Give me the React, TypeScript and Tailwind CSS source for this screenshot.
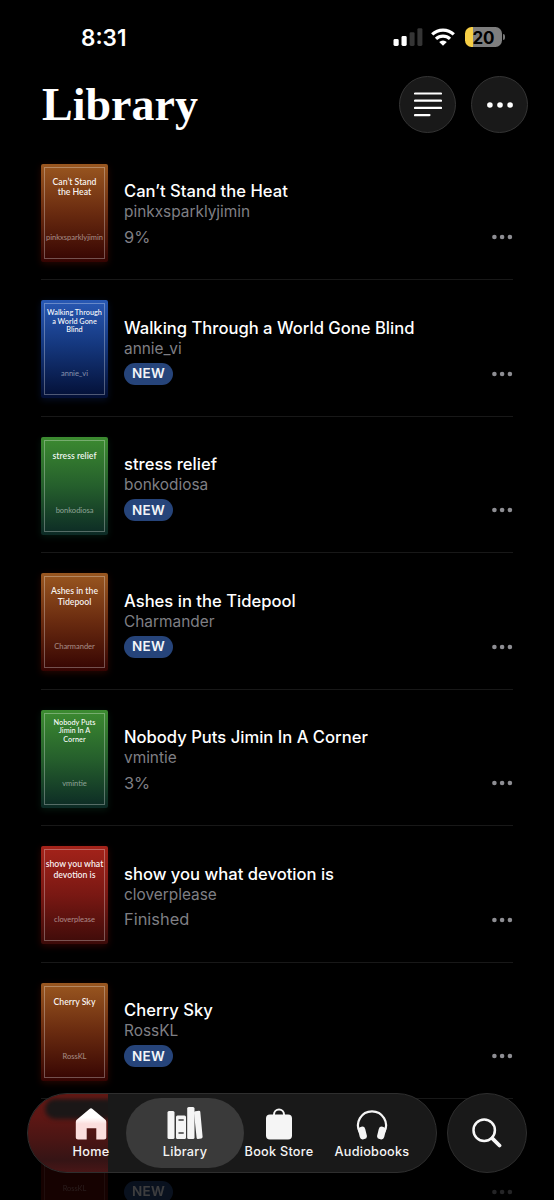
import type { ReactNode } from "react";
import clsx from "clsx";

type Book = {
  title: string;
  author: string;
  status: string;
  cover: keyof typeof coverColors;
  coverLines: string[];
  layout: keyof typeof titleLayouts;
};

const coverColors = {
  orange: "bg-[linear-gradient(180deg,#9a5720_0%,#6b2c10_48%,#350402_100%)] shadow-[0_2px_7px_rgba(110,20,5,0.35)]",
  blue: "bg-[linear-gradient(180deg,#2858b4_0%,#15387f_45%,#030f35_100%)] shadow-[0_2px_7px_rgba(15,45,120,0.3)]",
  green: "bg-[linear-gradient(180deg,#3c8b30_0%,#255f2c_50%,#0c2a25_100%)] shadow-[0_2px_7px_rgba(15,75,45,0.3)]",
  red: "bg-[linear-gradient(180deg,#a5231a_0%,#791813_50%,#3d0b09_100%)] shadow-[0_2px_7px_rgba(130,15,10,0.35)]",
};

const titleLayouts = {
  single: "pt-[9px] text-[8.7px] leading-[11px]",
  double: "pt-[9px] text-[8.7px] leading-[10.5px]",
  triple: "pt-[5px] text-[7.3px] leading-[8.7px]",
};

const books: Book[] = [
  {
    title: "Can’t Stand the Heat",
    author: "pinkxsparklyjimin",
    status: "9%",
    cover: "orange",
    coverLines: ["Can’t Stand", "the Heat"],
    layout: "double",
  },
  {
    title: "Walking Through a World Gone Blind",
    author: "annie_vi",
    status: "NEW",
    cover: "blue",
    coverLines: ["Walking Through", "a World Gone", "Blind"],
    layout: "triple",
  },
  {
    title: "stress relief",
    author: "bonkodiosa",
    status: "NEW",
    cover: "green",
    coverLines: ["stress relief"],
    layout: "single",
  },
  {
    title: "Ashes in the Tidepool",
    author: "Charmander",
    status: "NEW",
    cover: "orange",
    coverLines: ["Ashes in the", "Tidepool"],
    layout: "double",
  },
  {
    title: "Nobody Puts Jimin In A Corner",
    author: "vmintie",
    status: "3%",
    cover: "green",
    coverLines: ["Nobody Puts", "Jimin In A", "Corner"],
    layout: "triple",
  },
  {
    title: "show you what devotion is",
    author: "cloverplease",
    status: "Finished",
    cover: "red",
    coverLines: ["show you what", "devotion is"],
    layout: "double",
  },
  {
    title: "Cherry Sky",
    author: "RossKL",
    status: "NEW",
    cover: "orange",
    coverLines: ["Cherry Sky"],
    layout: "single",
  },
];

function Dots({ className }: { className?: string }) {
  return (
    <svg viewBox="0 0 22 6" className={clsx("h-[6px] w-[22px]", className)} fill="currentColor">
      <circle cx="3.4" cy="3" r="2.3" />
      <circle cx="11.1" cy="3" r="2.3" />
      <circle cx="18.9" cy="3" r="2.3" />
    </svg>
  );
}

function NewBadge() {
  return (
    <span className="flex h-[22px] w-[49px] items-center justify-center rounded-full bg-[#26447a] text-[13.5px] font-semibold tracking-[0.2px] text-[#f2f4f8]">
      NEW
    </span>
  );
}

function Cover({ book }: { book: Book }) {
  return (
    <div className={clsx("h-[98px] w-[67px] shrink-0 rounded-[2px] p-[3px]", coverColors[book.cover])}>
      <div className="flex h-full flex-col items-center justify-between border border-white/30 font-['Lato','Open_Sans',sans-serif] whitespace-nowrap">
        <div className={clsx("flex flex-col items-center font-semibold text-white/95", titleLayouts[book.layout])}>
          {book.coverLines.map((line) => (
            <span key={line}>{line}</span>
          ))}
        </div>
        <span className="pb-[15px] text-[7.5px] leading-[10px] text-white/50">{book.author}</span>
      </div>
    </div>
  );
}

function BookRow({ book }: { book: Book }) {
  return (
    <li className="flex h-[136.5px] border-b border-[#181818] pt-5">
      <Cover book={book} />
      <div className="flex flex-1 flex-col pt-[17.5px] pl-4">
        <h2 className="h-[21px] text-[16.6px] leading-5 font-medium whitespace-nowrap text-white">{book.title}</h2>
        <p className="h-5 text-[15.4px] leading-5 text-[#7f7f84]">{book.author}</p>
        <div className="mt-1 flex h-[22px] items-center justify-between">
          {book.status === "NEW" ? <NewBadge /> : <span className="text-[16.4px] text-[#7f7f84]">{book.status}</span>}
          <Dots className="text-[#8e8e93]" />
        </div>
      </div>
    </li>
  );
}

function StatusBar() {
  return (
    <div className="flex h-[60px] items-start justify-between pt-[25px] pr-[49px] pl-[81px]">
      <span className="text-[22.5px] leading-[26px] font-semibold">8:31</span>
      <div className="flex h-6 items-center">
        <svg viewBox="0 0 30 20" className="mr-[8px] h-5 w-[30px]" fill="#fff">
          <rect x="0.5" y="12" width="5.2" height="7" rx="1.4" />
          <rect x="8.5" y="9" width="5.2" height="10" rx="1.4" />
          <rect x="16.6" y="5.2" width="5" height="13.8" rx="1.4" fill="#353535" />
          <rect x="24.4" y="1.2" width="5" height="17.8" rx="1.4" fill="#353535" />
        </svg>
        <svg viewBox="0 0 24 18" className="mr-[10px] h-[18px] w-6" fill="none" stroke="#fff" strokeWidth="3.2">
          <path d="M1.2 6.4a15.7 15.7 0 0 1 21.6 0" />
          <path d="M5 10.9a10.1 10.1 0 0 1 14 0" />
          <path d="M12 17.8 8.2 14a5.5 5.5 0 0 1 7.6 0z" fill="#fff" stroke="none" />
        </svg>
        <div className="flex h-5 w-[37px] items-center justify-center rounded-[6.5px] bg-[linear-gradient(90deg,#f7cf46_0_8px,#7e7e7e_8px)] pt-px text-[17px] leading-5 font-bold text-black">
          20
        </div>
        <div className="ml-px h-[6px] w-[2px] rounded-r-full bg-[#777]" />
      </div>
    </div>
  );
}

function RoundButton({ label, children }: { label: string; children: ReactNode }) {
  return (
    <button
      type="button"
      aria-label={label}
      className="flex size-[57px] items-center justify-center rounded-full border border-[#343434] bg-[#191919]"
    >
      {children}
    </button>
  );
}

function HomeIcon() {
  return (
    <svg viewBox="0 0 32 32" className="size-8">
      <defs>
        <linearGradient id="home" x2="0" y2="1">
          <stop offset="0.3" stopColor="#fff" />
          <stop offset="0.5" stopColor="#fbdedd" />
        </linearGradient>
      </defs>
      <path
        d="M14.5.9a2.3 2.3 0 0 1 3 0l12.6 10.6c.8.7 1.2 1.4 1.2 2.4v15.4c0 1.4-.9 2.2-2.2 2.2h-7.8V20.2H11.7v11.3H3.1c-1.4 0-2.3-.8-2.3-2.2V13.9c0-1 .4-1.7 1.2-2.4z"
        fill="url(#home)"
      />
    </svg>
  );
}

function BooksIcon() {
  return (
    <svg viewBox="0 0 36 34" className="h-[34px] w-9" fill="#f5f5f5">
      <rect x="0.5" y="5" width="7" height="28" rx="1.5" />
      <path
        fillRule="evenodd"
        d="M10.5 9.5h7A1.5 1.5 0 0 1 19 11v20.5a1.5 1.5 0 0 1-1.5 1.500h-7A1.5 1.5 0 0 1 9 31.500V11a1.5 1.5 0 0 1 1.500-1.500zm1 3.700v1.600h5.200v-1.600zm0 13v1.600h5.200v-1.600z"
      />
      <rect x="20.2" y="1" width="7.3" height="32" rx="1.5" />
      <path d="m28.3 5.3 3.600-.5q1.200-.1 1.400 1l2.300 25q.1 1.400-1.200 1.600l-3.400.5q-1.300.1-1.400-1.200L27 7q-.1-1.500 1.300-1.700z" />
    </svg>
  );
}

function BagIcon() {
  return (
    <svg viewBox="0 0 28 32" className="h-8 w-7">
      <path d="M9 8V6.5a5 5 0 0 1 10 0V8" fill="none" stroke="#f5f5f5" strokeWidth="2" />
      <rect x="1" y="6.500" width="26" height="25" rx="4" fill="#f5f5f5" />
    </svg>
  );
}

function HeadphonesIcon() {
  return (
    <svg viewBox="0 0 32 32" className="size-8">
      <path d="M3.7 24A14 14 0 1 1 28.300 24" fill="none" stroke="#f5f5f5" strokeWidth="2.2" />
      <rect x="-3.6" y="-6.4" width="7.2" height="12.8" rx="3.2" transform="translate(6.5 25) rotate(-14)" fill="#f5f5f5" />
      <rect x="-3.6" y="-6.4" width="7.2" height="12.8" rx="3.2" transform="translate(25.5 25) rotate(14)" fill="#f5f5f5" />
    </svg>
  );
}

const tabs = [
  { label: "Home", icon: <HomeIcon />, className: "w-[70px]" },
  { label: "Library", icon: <BooksIcon />, className: "w-[118px] rounded-full bg-[#3a3a3a]" },
  { label: "Book Store", icon: <BagIcon />, className: "w-[70px]" },
  { label: "Audiobooks", icon: <HeadphonesIcon />, className: "w-[116px]" },
];

function TabBar() {
  return (
    <div className="absolute top-[1093px] left-[27px] flex gap-[10px]">
      <nav className="relative h-20 w-[410px] overflow-hidden rounded-full border border-[#2e2e2e] bg-[#191919]">
        {/* refraction of the cover scrolled underneath */}
        <div className="absolute inset-y-0 left-0 w-[80px] overflow-hidden bg-[linear-gradient(180deg,#641814_0%,#5d1714_30%,#491514_60%,#351415_85%,#491617_100%)]">
          <div className="absolute top-[5px] left-[17px] h-[20px] w-[74px] rounded-l-[12px] bg-[#1b1717] blur-[2px]" />
        </div>
        <div className="relative flex h-full items-center pl-[28px]">
          {tabs.map((tab) => (
            <div
              key={tab.label}
              className={clsx("flex h-[70px] shrink-0 flex-col items-center", tab.className)}
            >
              <div className="flex h-[42px] items-end">{tab.icon}</div>
              <span className="mt-1 text-[12.7px] leading-4 font-medium tracking-[0.25px] whitespace-nowrap text-[#f5f5f5]">
                {tab.label}
              </span>
            </div>
          ))}
        </div>
      </nav>
      <button
        type="button"
        aria-label="Search"
        className="flex size-20 items-center justify-center rounded-full border border-[#2e2e2e] bg-[#191919]"
      >
        <svg viewBox="0 0 30 30" className="size-[30px]" fill="none" stroke="#f8f8f8" strokeLinecap="round">
          <circle cx="12.2" cy="12.2" r="10.7" strokeWidth="2.5" />
          <path d="m20.3 20.3 7.2 7.2" strokeWidth="3.8" />
        </svg>
      </button>
    </div>
  );
}

export default function App() {
  return (
    <div className="relative h-[1200px] w-[554px] overflow-hidden bg-black font-['Inter','Liberation_Sans',sans-serif] text-white">
      <StatusBar />
      <header className="flex h-[83.5px] items-start justify-between pt-4 pr-[26px] pl-[42px]">
        <h1 className="pt-1 font-['Liberation_Serif',serif] text-[46px] leading-[50px] font-bold">Library</h1>
        <div className="flex gap-[15px]">
          <RoundButton label="Sort">
            <svg viewBox="0 0 28 25" className="h-[25px] w-7" stroke="#fff" strokeWidth="2.2" strokeLinecap="round">
              <path d="M1 1.5h26M1 8.7h26M1 15.900h26M1 23.100h14.500" />
            </svg>
          </RoundButton>
          <RoundButton label="More">
            <svg viewBox="0 0 26 6" className="h-[6px] w-[26px]" fill="#fff">
              <circle cx="2.9" cy="3" r="2.8" />
              <circle cx="13" cy="3" r="2.8" />
              <circle cx="23.1" cy="3" r="2.8" />
            </svg>
          </RoundButton>
        </div>
      </header>

      <ul className="px-[41px]">
        {books.map((book) => (
          <BookRow key={book.title} book={book} />
        ))}
        <li className="flex pt-5 opacity-25">
          <div className="h-[98px] w-[67px] bg-[#5a0805] p-[3px]">
            <div className="flex h-full items-end justify-center border border-white/20 pb-[19px] font-['Lato',sans-serif] text-[7.4px] leading-[10px] text-white/40">
              RossKL
            </div>
          </div>
          <div className="flex flex-1 items-start justify-between pt-[61.5px] pl-4">
            <NewBadge />
            <Dots className="mt-2 text-[#919196]" />
          </div>
        </li>
      </ul>

      <TabBar />
    </div>
  );
}
